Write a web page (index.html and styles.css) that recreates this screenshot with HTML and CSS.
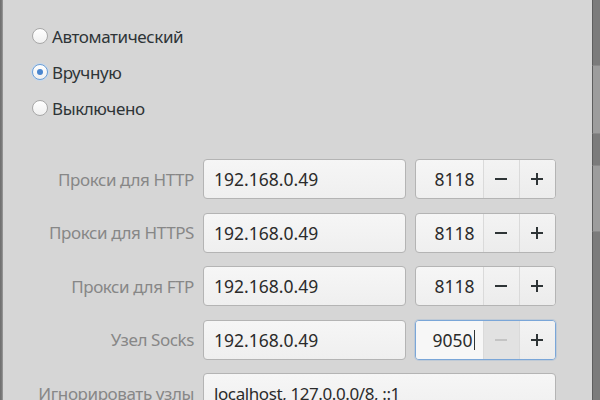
FILE: index.html
```html
<!DOCTYPE html>
<html lang="ru">
<head>
<meta charset="utf-8">
<title>Прокси</title>
<link rel="stylesheet" href="styles.css">
</head>
<body>
<div class="desktop">
  <div class="edge-left"></div>
  <div class="dialog">
    <div class="radios">
      <label class="radio"><span class="dot"></span>Автоматический</label>
      <label class="radio"><span class="dot checked"></span>Вручную</label>
      <label class="radio"><span class="dot"></span>Выключено</label>
    </div>
    <div class="form">
      <div class="lbl">Прокси для HTTP</div>
      <div class="entry">192.168.0.49</div>
      <div class="spin">
        <div class="val">8118</div>
        <div class="btn"><svg width="14" height="14" viewBox="0 0 14 14"><rect x="1" y="6" width="12" height="2" fill="#2e3436"/></svg></div>
        <div class="btn"><svg width="14" height="14" viewBox="0 0 14 14"><rect x="1" y="6" width="12" height="2" fill="#2e3436"/><rect x="6" y="1" width="2" height="12" fill="#2e3436"/></svg></div>
      </div>

      <div class="lbl">Прокси для HTTPS</div>
      <div class="entry">192.168.0.49</div>
      <div class="spin">
        <div class="val">8118</div>
        <div class="btn"><svg width="14" height="14" viewBox="0 0 14 14"><rect x="1" y="6" width="12" height="2" fill="#2e3436"/></svg></div>
        <div class="btn"><svg width="14" height="14" viewBox="0 0 14 14"><rect x="1" y="6" width="12" height="2" fill="#2e3436"/><rect x="6" y="1" width="2" height="12" fill="#2e3436"/></svg></div>
      </div>

      <div class="lbl">Прокси для FTP</div>
      <div class="entry">192.168.0.49</div>
      <div class="spin">
        <div class="val">8118</div>
        <div class="btn"><svg width="14" height="14" viewBox="0 0 14 14"><rect x="1" y="6" width="12" height="2" fill="#2e3436"/></svg></div>
        <div class="btn"><svg width="14" height="14" viewBox="0 0 14 14"><rect x="1" y="6" width="12" height="2" fill="#2e3436"/><rect x="6" y="1" width="2" height="12" fill="#2e3436"/></svg></div>
      </div>

      <div class="lbl">Узел Socks</div>
      <div class="entry">192.168.0.49</div>
      <div class="spin focus">
        <div class="val">9050<span class="caret"></span></div>
        <div class="btn disabled"><svg width="14" height="14" viewBox="0 0 14 14"><rect x="1" y="6" width="12" height="2" fill="#c4c4c4"/></svg></div>
        <div class="btn"><svg width="14" height="14" viewBox="0 0 14 14"><rect x="1" y="6" width="12" height="2" fill="#2e3436"/><rect x="6" y="1" width="2" height="12" fill="#2e3436"/></svg></div>
      </div>

      <div class="lbl">Игнорировать узлы</div>
      <div class="entry wide text">localhost, 127.0.0.0/8, ::1</div>
    </div>
  </div>
  <div class="edge-right">
    <div class="seg dark" style="height:65px"></div>
    <div class="seg light" style="height:69px"></div>
    <div class="seg dark" style="height:31px"></div>
    <div class="seg light" style="height:67px"></div>
    <div class="seg dark" style="height:168px"></div>
  </div>
</div>
</body>
</html>
```

FILE: styles.css
```css
html, body {
  margin: 0;
  padding: 0;
}
body {
  width: 600px;
  height: 400px;
  overflow: hidden;
  background: #d6d6d6;
  font-family: "Noto Sans", "DejaVu Sans", sans-serif;
  font-size: 17.5px;
  color: #2e3436;
}
.desktop {
  display: flex;
  height: 400px;
}
.edge-left {
  width: 3px;
  background: linear-gradient(to right, #6e6e6e, #7e7e7e 66%, #a5a5a5);
}
.dialog {
  flex: 1;
  background: #d6d6d6;
}
.edge-right {
  width: 8px;
  display: flex;
  flex-direction: column;
}
.seg {
  border-left: 1px solid #5e5e5e;
}
.seg.dark { background: #7b7b7b; }
.seg.light {
  background: #9d9d9d;
  border-top: 1px solid #8a8a8a;
  border-bottom: 1px solid #8a8a8a;
  box-sizing: border-box;
}

.radios {
  padding: 18px 0 0 26px;
  display: flex;
  flex-direction: column;
}
.radio {
  height: 36px;
  display: flex;
  align-items: center;
  line-height: 1;
  font-size: 17px;
  letter-spacing: -0.4px;
}
.dot {
  box-sizing: border-box;
  width: 16px;
  height: 16px;
  border-radius: 50%;
  border: 1px solid #a8a8a8;
  background: linear-gradient(#ffffff, #f0f0f0);
  margin-right: 4px;
  margin-left: 3px;
  display: inline-flex;
  align-items: center;
  justify-content: center;
}
.dot.checked {
  border-color: #6a9fd8;
  box-shadow: 0 0 0 1px #c3d8ef;
}
.dot.checked::after {
  content: "";
  width: 6px;
  height: 6px;
  border-radius: 50%;
  background: #4a86cf;
}

.form {
  margin-top: 33px;
  display: grid;
  grid-template-columns: 191px 203px 141px;
  column-gap: 9px;
  row-gap: 13.5px;
  grid-auto-rows: 40px;
}
.lbl {
  color: #878787;
  text-align: right;
  display: flex;
  align-items: center;
  justify-content: flex-end;
  font-size: 17px;
  letter-spacing: -0.4px;
}
.entry {
  box-sizing: border-box;
  border: 1px solid #b4b4b4;
  border-radius: 4px;
  background: linear-gradient(#f6f6f6, #efefef);
  padding-left: 10px;
  display: flex;
  align-items: center;
  color: #2b2b2b;
}
.entry.text {
  font-size: 17px;
  letter-spacing: -0.4px;
}
.entry.wide {
  grid-column: 2 / 4;
}
.spin {
  box-sizing: border-box;
  border: 1px solid #b4b4b4;
  border-radius: 4px;
  background: linear-gradient(#f6f6f6, #efefef);
  display: flex;
  overflow: hidden;
  color: #2b2b2b;
}
.spin .val {
  width: 68px;
  box-sizing: border-box;
  padding-right: 8px;
  display: flex;
  align-items: center;
  justify-content: flex-end;
}
.spin .btn {
  width: 36px;
  border-left: 1px solid #dadada;
  display: flex;
  align-items: center;
  justify-content: center;
  background: linear-gradient(#f3f3f3, #ececec);
}
.spin.focus {
  border-color: #7aa6d8;
  box-shadow: 0 0 0 1px rgba(122, 166, 216, 0.25);
}
.spin.focus .val {
  background: #f7f7f7;
}
.spin .btn.disabled {
  background: #e2e2e2;
}
.caret {
  display: inline-block;
  width: 1px;
  height: 20px;
  background: #2e3436;
  margin-left: 1px;
}
```
